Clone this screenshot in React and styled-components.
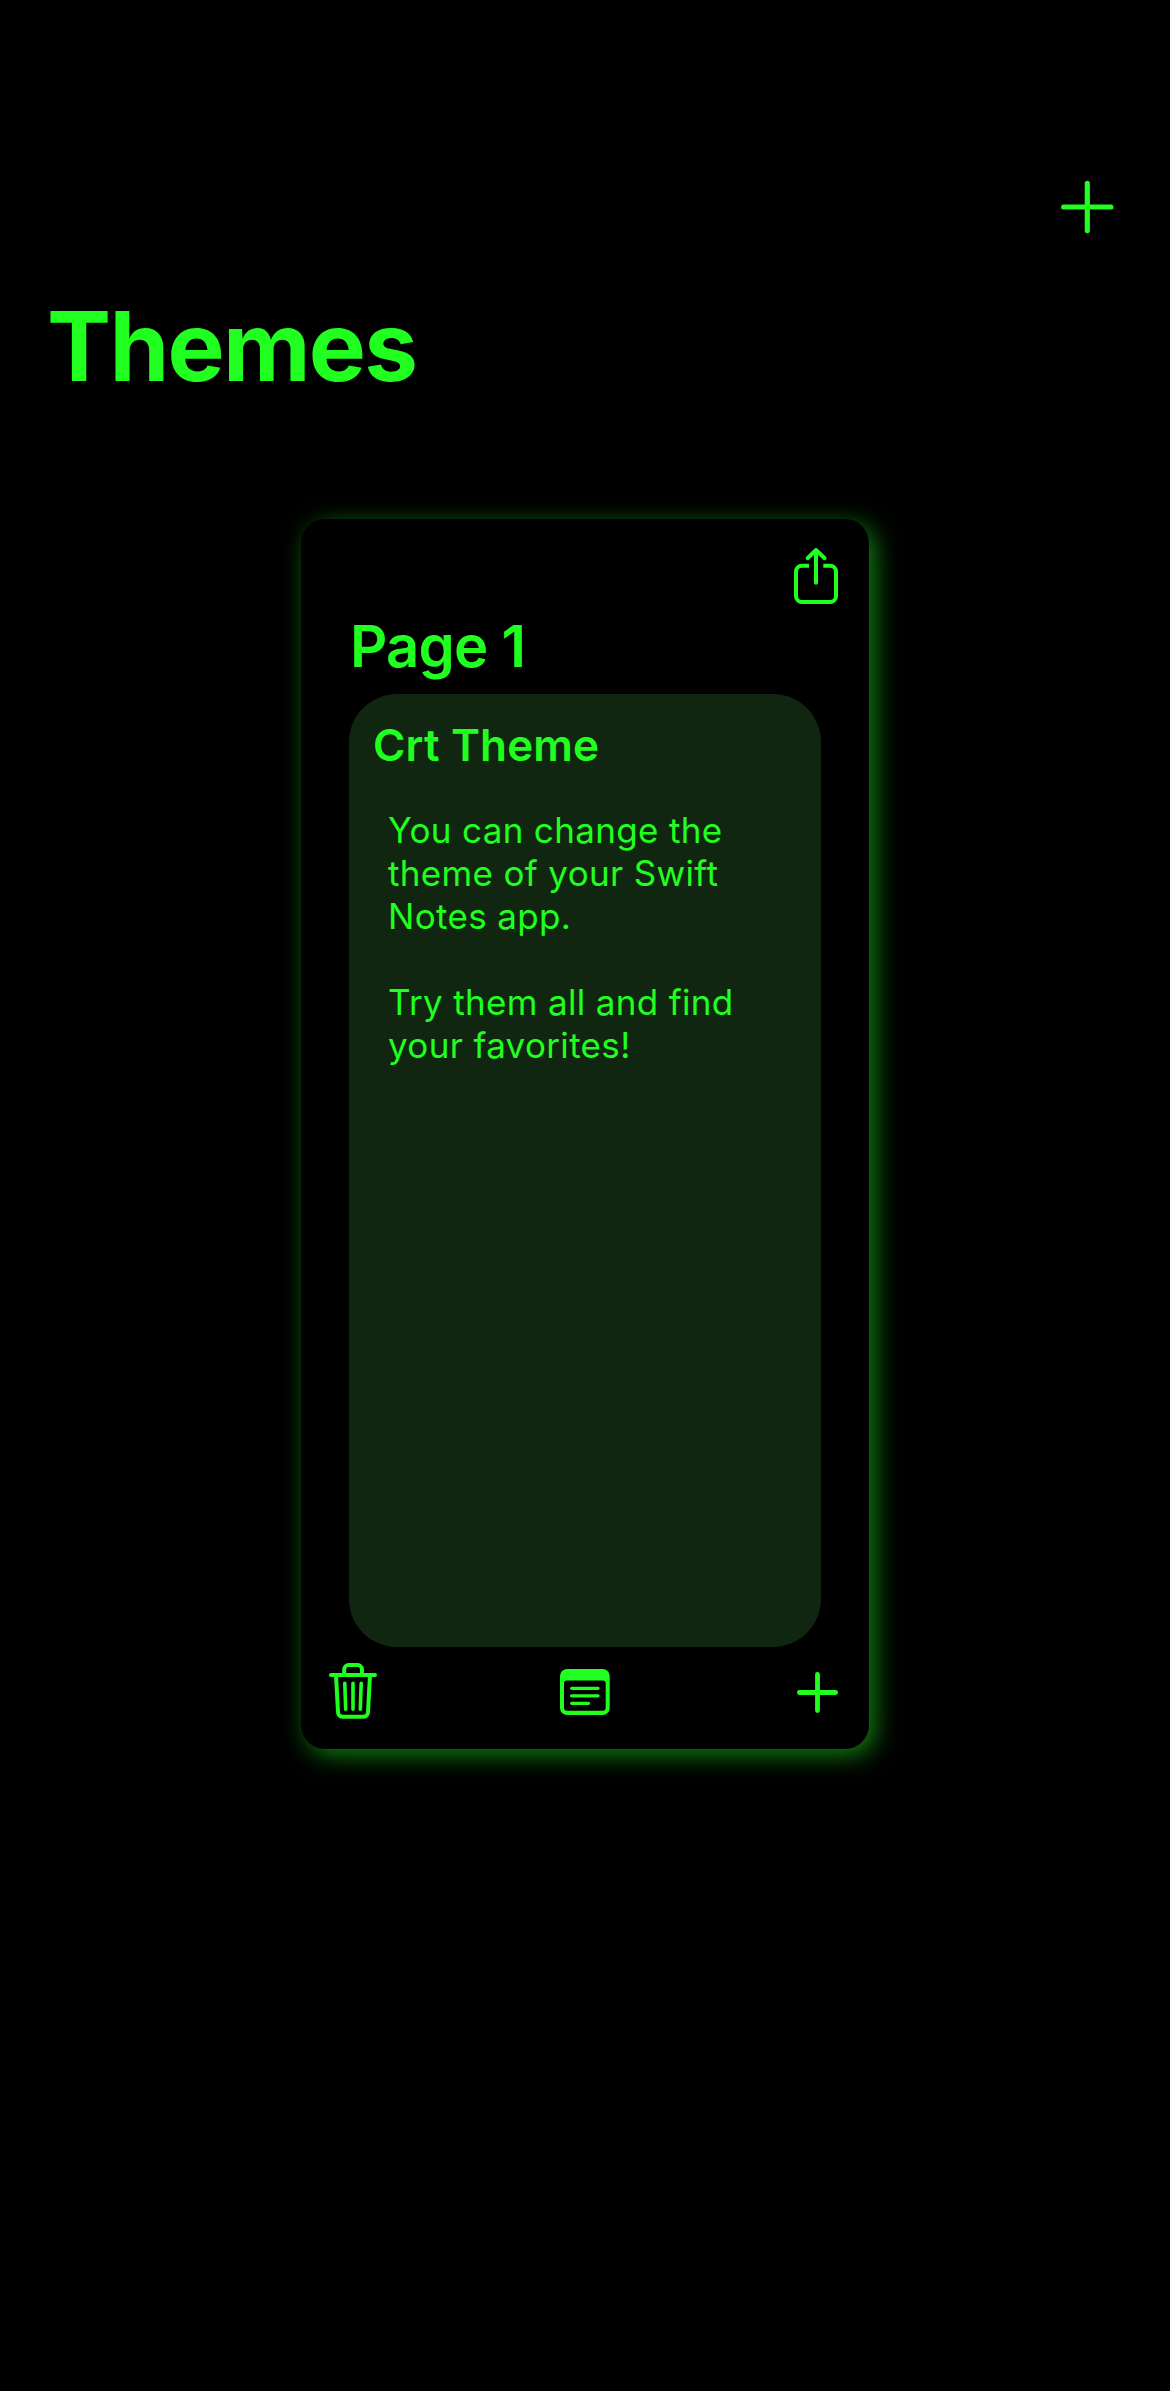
import React from "react";
import styled, { createGlobalStyle, ThemeProvider } from "styled-components";

const theme = {
  accent: "#20ff20",
  panel: "#112610",
  glow: "rgba(32, 255, 32, 0.5)",
};

const GlobalStyle = createGlobalStyle`
  *, *::before, *::after { box-sizing: border-box; }
  html, body { margin: 0; background: #000; }
  h1, h2, h3, p { margin: 0; }
`;

const Screen = styled.main`
  display: flex;
  flex-direction: column;
  min-height: 2391px;
  background: #000;
  color: ${({ theme }) => theme.accent};
  font-family: Inter, "Liberation Sans", sans-serif;
`;

const NavBar = styled.header`
  display: flex;
  justify-content: flex-end;
  padding: 179px 55px 0 0;
`;

const IconButton = styled.button`
  display: block;
  width: 56px;
  height: 56px;
  padding: 0;
  border: 0;
  background: none;
  color: inherit;
`;

const Icon = styled.svg.attrs({ viewBox: "0 0 56 56", fill: "none" })`
  display: block;
  width: 56px;
  height: 56px;
  overflow: visible;
  stroke: currentColor;
  stroke-width: ${({ $weight }) => $weight || 4};
  stroke-linecap: round;
  stroke-linejoin: round;
`;

const ScreenTitle = styled.h1`
  padding: 53px 47px 0;
  font-size: 96px;
  line-height: 116px;
  font-weight: 700;
  letter-spacing: -1.7px;
`;

const Card = styled.section`
  display: flex;
  flex-direction: column;
  align-self: center;
  width: 568px;
  height: 1230px;
  margin-top: 115px;
  border-radius: 24px;
  background: #000;
  box-shadow: 6px 6px 24px ${({ theme }) => theme.glow};
`;

const CardBar = styled.div`
  display: flex;
  justify-content: flex-end;
  padding: 29px 25px 0;
`;

const PageTitle = styled.h2`
  padding: 7px 49px 0;
  font-size: 58px;
  line-height: 70px;
  font-weight: 600;
  letter-spacing: -0.8px;
`;

const Note = styled.article`
  display: flex;
  flex-direction: column;
  gap: 37px;
  height: 953px;
  margin: 13px 48px 0;
  padding: 24px 24px;
  border-radius: 48px;
  background: ${({ theme }) => theme.panel};
`;

const NoteTitle = styled.h3`
  font-size: 44px;
  line-height: 54px;
  font-weight: 600;
  letter-spacing: 0.15px;
`;

const NoteText = styled.p`
  padding-left: 15px;
  font-size: 35px;
  line-height: 43px;
  font-weight: 400;
  white-space: pre;
  letter-spacing: 0.34px;
`;

const ToolBar = styled.footer`
  display: flex;
  justify-content: space-between;
  padding: 17px 24px 0;
`;

const PlusIcon = ({ half, weight, cx = 28, cy = 28 }) => (
  <Icon $weight={weight}>
    <path d={`M${cx} ${cy - half}V${cy + half}M${cx - half} ${cy}H${cx + half}`} />
  </Icon>
);

const ShareIcon = () => (
  <Icon>
    <path strokeLinecap="butt" d="M21 17.7H14a6 6 0 0 0-6 6V48a6 6 0 0 0 6 6H42a6 6 0 0 0 6-6V23.7a6 6 0 0 0-6-6H35.3" />
    <path d="M28 2.3V34.8M19.6 10.2L28 2L36.6 10.2" />
  </Icon>
);

const TrashIcon = () => (
  <Icon>
    <path d="M6 11H50" />
    <path d="M19.2 11V5.5a4.4 4.4 0 0 1 4.4-4.4H32.6A4.4 4.4 0 0 1 37 5.5V11" />
    <path d="M11 11L13 48.2a4.8 4.8 0 0 0 4.8 4.6H38.2a4.8 4.8 0 0 0 4.8-4.6L45 11" />
    <path strokeWidth="3.6" d="M19.8 19.2L20.7 45.2M28 19.2V45.2M36.2 19.2L35.3 45.2" />
  </Icon>
);

const NoteIcon = () => (
  <Icon $weight={3.2}>
    <path
      fill="currentColor"
      stroke="none"
      fillRule="evenodd"
      d="M10 5H45.7a7 7 0 0 1 7 7V44a7 7 0 0 1-7 7H10a7 7 0 0 1-7-7V12a7 7 0 0 1 7-7ZM10 16.4a3 3 0 0 0-3 3V43.7a3 3 0 0 0 3 3H45.7a3 3 0 0 0 3-3V19.4a3 3 0 0 0-3-3Z"
    />
    <path d="M14.6 24.3H41.1M14.6 31.8H41.1M14.6 39.3H31.5" />
  </Icon>
);

export default function App() {
  return (
    <ThemeProvider theme={theme}>
      <GlobalStyle />
      <Screen>
        <NavBar>
          <IconButton aria-label="Add theme">
            <PlusIcon half={23.6} weight={5.2} cx={28.3} />
          </IconButton>
        </NavBar>
        <ScreenTitle>Themes</ScreenTitle>
        <Card>
          <CardBar>
            <IconButton aria-label="Share">
              <ShareIcon />
            </IconButton>
          </CardBar>
          <PageTitle>Page 1</PageTitle>
          <Note>
            <NoteTitle>Crt Theme</NoteTitle>
            <NoteText>
              {"You can change the\ntheme of your Swift\nNotes app.\n\nTry them all and find\nyour favorites!"}
            </NoteText>
          </Note>
          <ToolBar>
            <IconButton aria-label="Delete">
              <TrashIcon />
            </IconButton>
            <IconButton aria-label="Notes">
              <NoteIcon />
            </IconButton>
            <IconButton aria-label="Add note">
              <PlusIcon half={18.1} weight={4.8} cx={28.5} cy={28.5} />
            </IconButton>
          </ToolBar>
        </Card>
      </Screen>
    </ThemeProvider>
  );
}
